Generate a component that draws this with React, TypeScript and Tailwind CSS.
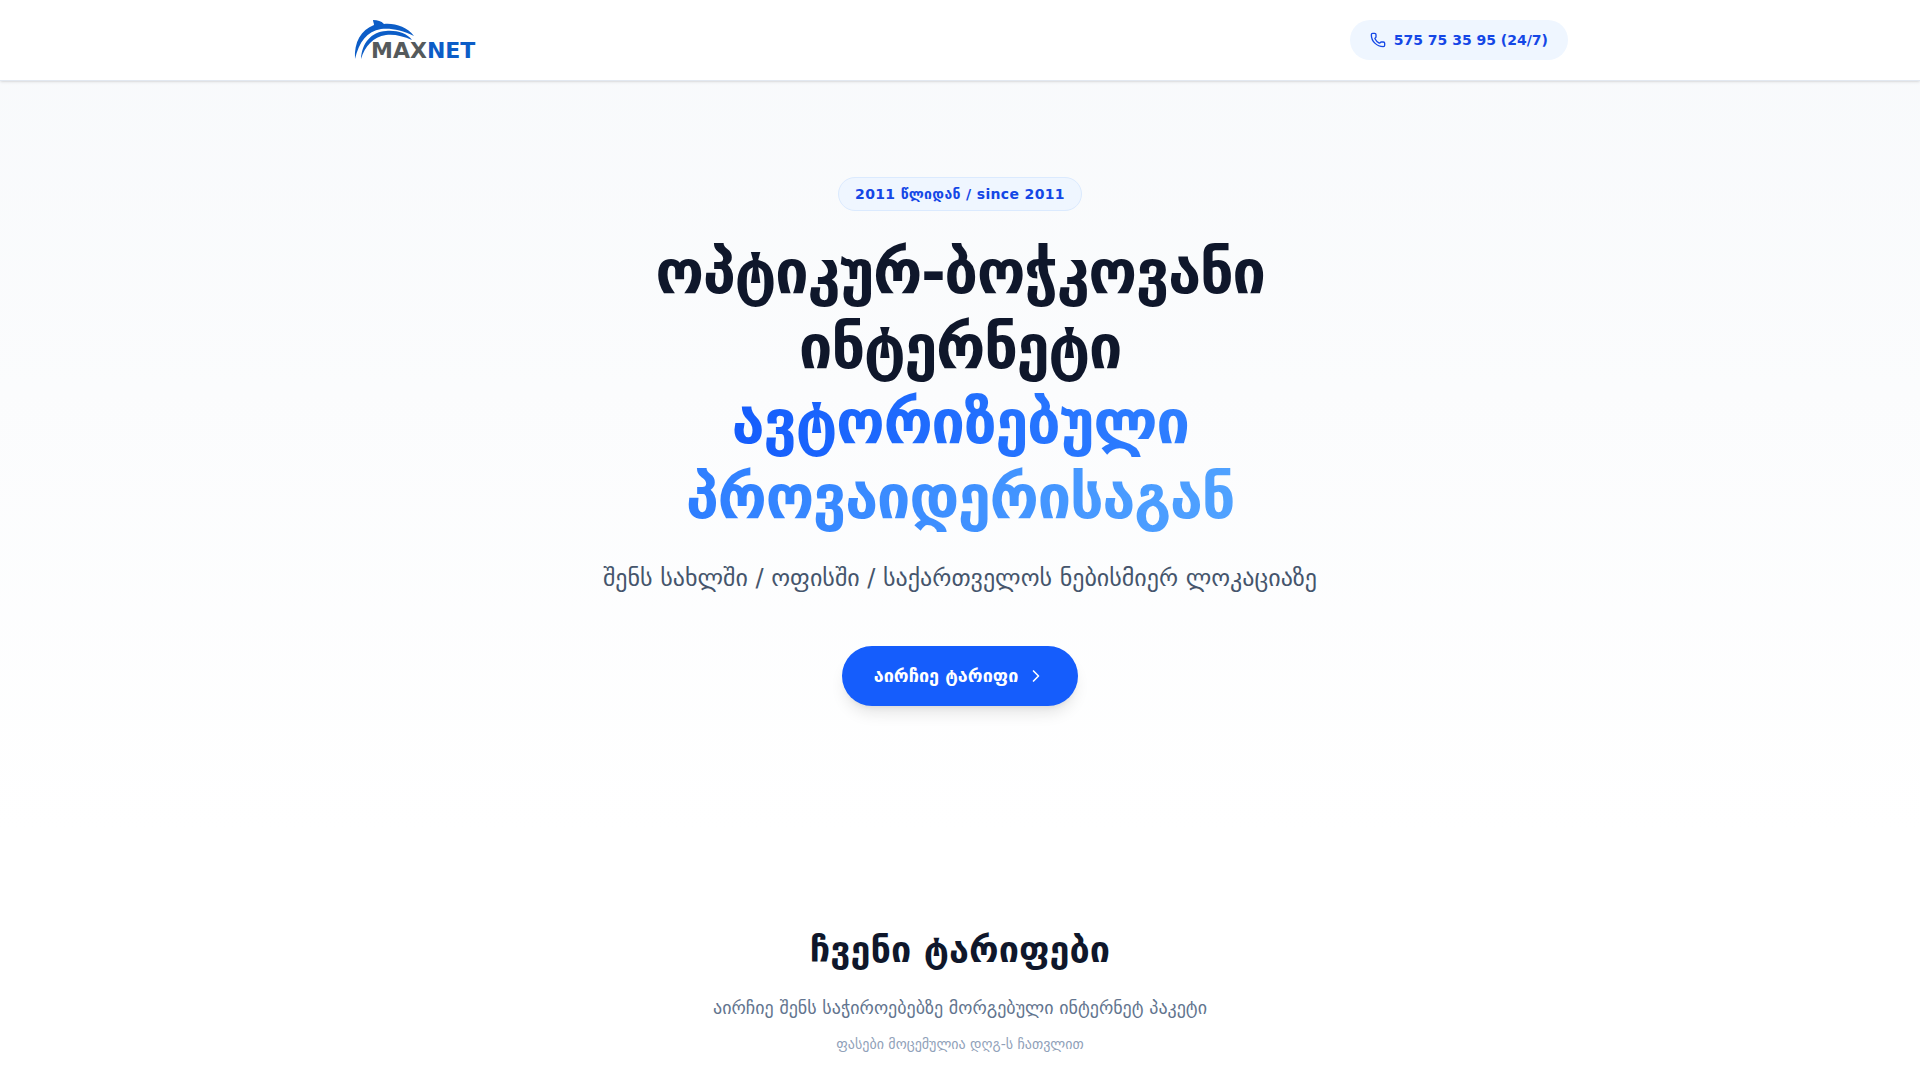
import React from 'react';
import { ChevronRight, Phone } from 'lucide-react';

const Logo: React.FC = () => (
  <svg className="h-12 w-auto" viewBox="0 0 128 48" role="img" aria-label="MAXNET">
    <g fill="#0c5dc7">
      <path d="M3 43C2 26 9 14 22 9C22 7 21 6 21 4C26 4 29 5 32 8C43 7 55 11 62 20C50 14 39 12 29 13C15 15 7 26 3 43Z" />
      <path d="M9 43C10 27 19 16 34 15C44 14 55 17 60 24C51 20 42 18 34 19C21 21 13 30 9 43Z" />
    </g>
    <text x="19" y="42" fontSize="22" fontWeight="bold" fontFamily="DejaVu Sans, sans-serif" fill="#555a5c">
      MAX<tspan fill="#0c5dc7">NET</tspan>
    </text>
  </svg>
);

const Header: React.FC = () => (
  <header className="sticky top-0 z-50 bg-white/95 border-b border-slate-200 shadow-sm">
    <div className="max-w-7xl mx-auto px-8 h-20 flex items-center justify-between">
      <a href="#top">
        <Logo />
      </a>
      <a href="tel:575753595" className="flex items-center gap-2 bg-blue-50 text-blue-700 px-5 py-2.5 rounded-full text-sm font-bold">
        <Phone className="w-4 h-4" />
        <span>575 75 35 95 (24/7)</span>
      </a>
    </div>
  </header>
);

const Hero: React.FC = () => (
  <section className="bg-gradient-to-b from-slate-50 to-white pt-24 pb-32 px-8">
    <div className="max-w-4xl mx-auto text-center">
      <span className="inline-block py-1.5 px-4 rounded-full bg-blue-50 border border-blue-100 text-blue-700 text-sm font-bold tracking-wide mb-6">
        2011 წლიდან / since 2011
      </span>
      <h1 className="max-w-3xl mx-auto text-6xl font-extrabold text-slate-900 leading-tight tracking-tight mb-6">
        ოპტიკურ-ბოჭკოვანი ინტერნეტი <br />
        <span className="text-transparent bg-clip-text bg-gradient-to-r from-blue-600 to-blue-400">
          ავტორიზებული პროვაიდერისაგან
        </span>
      </h1>
      <p className="text-2xl text-slate-600 leading-relaxed mb-12">
        შენს სახლში / ოფისში / საქართველოს ნებისმიერ ლოკაციაზე
      </p>
      <button type="button" className="inline-flex items-center gap-2 bg-blue-600 text-white px-8 py-4 rounded-full text-lg font-bold shadow-lg">
        აირჩიე ტარიფი
        <ChevronRight className="w-5 h-5" />
      </button>
    </div>
  </section>
);

const Tariffs: React.FC = () => (
  <section className="bg-white pt-24 pb-4 px-8 text-center">
    <h2 className="text-4xl font-bold text-slate-900 mb-6">ჩვენი ტარიფები</h2>
    <p className="text-lg text-slate-500">აირჩიე შენს საჭიროებებზე მორგებული ინტერნეტ პაკეტი</p>
    <p className="text-sm text-slate-400 mt-3">ფასები მოცემულია დღგ-ს ჩათვლით</p>
  </section>
);

const App: React.FC = () => (
  <div id="top" className="min-h-screen bg-white font-['DejaVu_Sans',sans-serif]">
    <Header />
    <main>
      <Hero />
      <Tariffs />
    </main>
  </div>
);

export default App;
